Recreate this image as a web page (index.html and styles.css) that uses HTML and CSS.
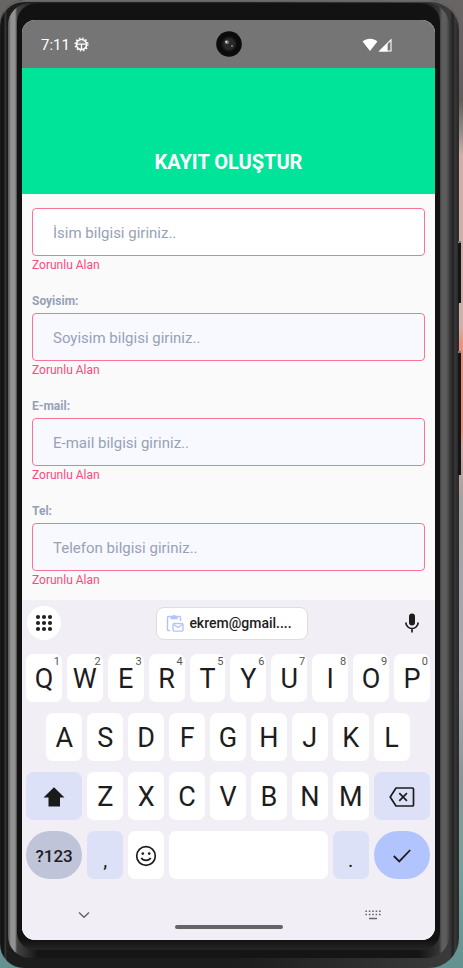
FILE: index.html
```html
<!DOCTYPE html>
<html lang="tr">
<head>
<meta charset="utf-8">
<meta name="viewport" content="width=device-width, initial-scale=1">
<title>Kayıt Oluştur</title>
<link rel="stylesheet" href="styles.css">
</head>
<body>
<div class="phone">
  <div class="rim">
  <div class="bezel">
    <main class="screen">
      <div class="status">
        <span class="clock">7:11</span>
        <svg class="gear" viewBox="0 0 16 16" width="15" height="15" fill="none" stroke="#fff">
          <circle cx="8" cy="8" r="5.4" stroke-width="1.7"/>
          <circle cx="8" cy="8" r="6.8" stroke-width="1.5" stroke-dasharray="1.6 1.96"/>
          <path d="M3 7.6h10M8 8v5" stroke-width="1.4"/>
          <path d="M6 5.4h.9M9.2 5.4h.9" stroke-width="1"/>
        </svg>
        <svg class="camera" viewBox="0 0 26 26" width="26" height="26">
          <circle cx="13" cy="13" r="12.8" fill="#0b0b0b"/>
          <circle cx="13" cy="13" r="7.6" fill="#191919"/>
          <circle cx="13" cy="13" r="6" fill="#292929"/>
          <circle cx="11" cy="11.3" r="2" fill="#777"/>
          <circle cx="10.2" cy="10.7" r="1" fill="#e4e4e4"/>
          <circle cx="16" cy="15" r="1" fill="#8c7c7c"/>
        </svg>
        <svg class="signals" viewBox="0 0 30 14" width="30" height="14">
          <path d="M.6 3.4C4.800 0 11.400 0 15.400 3.400L8 13Z" fill="#fff"/>
          <path d="M29 1.800V13H17.800Z" fill="none" stroke="#fff" stroke-width="1.100"/>
          <path d="M25.600 5V13.400H17Z" fill="#fff"/>
        </svg>
      </div>
      <header class="header"><h1>KAYIT OLUŞTUR</h1></header>
      <form class="form">
        <div class="field">
          <input class="box active" type="text" aria-label="İsim" placeholder="İsim bilgisi giriniz..">
          <p class="error">Zorunlu Alan</p>
        </div>
        <div class="field">
          <label for="surname">Soyisim:</label>
          <input class="box" id="surname" type="text" placeholder="Soyisim bilgisi giriniz..">
          <p class="error">Zorunlu Alan</p>
        </div>
        <div class="field">
          <label for="email">E-mail:</label>
          <input class="box" id="email" type="email" placeholder="E-mail bilgisi giriniz..">
          <p class="error">Zorunlu Alan</p>
        </div>
        <div class="field">
          <label for="tel">Tel:</label>
          <input class="box" id="tel" type="tel" placeholder="Telefon bilgisi giriniz..">
          <p class="error">Zorunlu Alan</p>
        </div>
      </form>
      <section class="keyboard">
        <div class="toolbar">
          <button class="apps" type="button" aria-label="Menü">
            <svg viewBox="0 0 18 18" width="18" height="18" fill="#222">
              <circle cx="3" cy="3" r="2.100"/><circle cx="9" cy="3" r="2.100"/><circle cx="15" cy="3" r="2.100"/>
              <circle cx="3" cy="9" r="2.100"/><circle cx="9" cy="9" r="2.100"/><circle cx="15" cy="9" r="2.100"/>
              <circle cx="3" cy="15" r="2.100"/><circle cx="9" cy="15" r="2.100"/><circle cx="15" cy="15" r="2.100"/>
            </svg>
          </button>
          <button class="chip" type="button">
            <svg viewBox="0 0 18 18" width="18" height="18" fill="none" stroke="#b3c4fd" stroke-width="1.400">
              <path d="M4 16.500H2.500a1 1 0 0 1-1-1V3.500a1 1 0 0 1 1-1h11a1 1 0 0 1 1 1V7"/>
              <path d="M4.500 2h2a1.800 1.800 0 0 1 3.200 0h2v3.200H4.500Z" fill="#b3c4fd" stroke="none"/>
              <rect x="7" y="9.500" width="10" height="7.600" rx="1"/>
              <path d="M7.500 10.500l4.500 3 4.500-3"/>
            </svg>
            <span>ekrem@gmail....</span>
          </button>
          <button class="mic" type="button" aria-label="Sesle yazma">
            <svg viewBox="0 0 14 20" width="14" height="20">
              <rect x="4" y="0.500" width="6" height="12" rx="3" fill="#1d1d1d"/>
              <path d="M.9 9.500a6.100 6 0 0 0 12.200 0M7 15.500V19.500" fill="none" stroke="#1d1d1d" stroke-width="1.700"/>
            </svg>
          </button>
        </div>
        <div class="keys">
          <button type="button" class="key">Q<sup>1</sup></button>
          <button type="button" class="key">W<sup>2</sup></button>
          <button type="button" class="key">E<sup>3</sup></button>
          <button type="button" class="key">R<sup>4</sup></button>
          <button type="button" class="key">T<sup>5</sup></button>
          <button type="button" class="key">Y<sup>6</sup></button>
          <button type="button" class="key">U<sup>7</sup></button>
          <button type="button" class="key">I<sup>8</sup></button>
          <button type="button" class="key">O<sup>9</sup></button>
          <button type="button" class="key">P<sup>0</sup></button>
          <button type="button" class="key indent">A</button>
          <button type="button" class="key">S</button>
          <button type="button" class="key">D</button>
          <button type="button" class="key">F</button>
          <button type="button" class="key">G</button>
          <button type="button" class="key">H</button>
          <button type="button" class="key">J</button>
          <button type="button" class="key">K</button>
          <button type="button" class="key">L</button>
          <button type="button" class="key wide tint first" aria-label="Shift">
            <svg viewBox="0 0 22 20" width="22" height="20"><path d="M11 .2L21.500 10.500H17V19.600H5.500V10.500H.5Z" fill="#1a1a1a"/></svg>
          </button>
          <button type="button" class="key">Z</button>
          <button type="button" class="key">X</button>
          <button type="button" class="key">C</button>
          <button type="button" class="key">V</button>
          <button type="button" class="key">B</button>
          <button type="button" class="key">N</button>
          <button type="button" class="key">M</button>
          <button type="button" class="key wide tint" aria-label="Sil">
            <svg viewBox="0 0 26 20" width="26" height="20" fill="none" stroke="#1d1d1d" stroke-width="1.700" stroke-linejoin="round">
              <path d="M7 1H23.500a1 1 0 0 1 1 1V18a1 1 0 0 1-1 1H7L1.200 10Z"/>
              <path d="M10.300 6.200l7.600 7.600M17.900 6.200l-7.600 7.600"/>
            </svg>
          </button>
          <button type="button" class="key wide round symbols first">?123</button>
          <button type="button" class="key tint mark">,</button>
          <button type="button" class="key" aria-label="Emoji">
            <svg viewBox="0 0 22 22" width="22" height="22" fill="none" stroke="#1d1d1d" stroke-width="1.700">
              <circle cx="11" cy="11" r="9.300"/>
              <path d="M6.300 12.800a5.200 4.500 0 0 0 9.400 0"/>
              <circle cx="7.800" cy="8.600" r="1.300" fill="#1d1d1d" stroke="none"/>
              <circle cx="14.200" cy="8.600" r="1.300" fill="#1d1d1d" stroke="none"/>
            </svg>
          </button>
          <button type="button" class="key space" aria-label="Boşluk"></button>
          <button type="button" class="key tint mark">.</button>
          <button type="button" class="key wide round enter" aria-label="Tamam">
            <svg viewBox="0 0 18 14" width="18" height="14" fill="none" stroke="#1d1d1d" stroke-width="1.800"><path d="M.8 7L6.300 12.400 17.200 1"/></svg>
          </button>
        </div>
        <nav class="navbar">
          <button type="button" aria-label="Klavyeyi gizle">
            <svg viewBox="0 0 12 8" width="12" height="8" fill="none" stroke="#666" stroke-width="1.500"><path d="M1 1.500l5 4.700 5-4.700"/></svg>
          </button>
          <span class="pill"></span>
          <button type="button" aria-label="Klavye seç">
            <svg viewBox="0 0 16 10" width="16" height="10" fill="none" stroke="#666" stroke-width="1.600">
              <path d="M.4 1.300H16M.4 4.500H16" stroke-dasharray="1.600 1.800"/><path d="M4 8.500h8"/>
            </svg>
          </button>
        </nav>
      </section>
    </main>
  </div>
  </div>
</div>
</body>
</html>
```
FILE: styles.css
```css
* { box-sizing: border-box; }

body {
  margin: 0;
  min-height: 100vh;
  display: flex;
  font-family: Roboto, "Liberation Sans", sans-serif;
  background: linear-gradient(to bottom, #686564 0, #625d5c 100px, #8f8886 130px, #cfaea5 155px, #cdb2a9 325px, #e8917f 345px, #e8917f 430px, #cfaea5 445px, #a3a0a1 500px, #a9a8b0 680px, #8a9594 780px, #77a09b 870px, #62918f 968px);
}

button {
  margin: 0;
  padding: 0;
  border: 0;
  background: none;
  font-family: inherit;
  color: #1d1d1d;
}

svg { display: block; }

.phone {
  flex: 1;
  display: flex;
  position: relative;
  margin: 0 4px 0 0;
  padding: 3px 10px 10px 8px;
  border-radius: 24px 28px 30px 24px;
  background: linear-gradient(to right, #141414 0, #141414 4px, #3c3c3c 5px, #1c1c1c 7px, #1c1c1c 50%, #3a3a3a calc(100% - 9px), #202020 calc(100% - 6px), #393939 calc(100% - 4px), #242424 100%);
  box-shadow: inset 0 2px 1px #6b6b6b;
}

/* power and volume buttons on the right edge */
.phone::before,
.phone::after {
  content: "";
  position: absolute;
  right: -2px;
  width: 3px;
  background: #151515;
  border-top: 2px solid #777;
}

.phone::before { top: 241px; height: 60px; }
.phone::after { top: 351px; height: 122px; }

.rim {
  flex: 1;
  display: flex;
  padding: 1px 9px 8px;
  border-radius: 22px;
  background: linear-gradient(to right, #555 0, #929292 3px, #929292 7px, #444 9px, #151515 30px, #151515 calc(100% - 30px), #333 calc(100% - 10px), #5d5d5d calc(100% - 7px), #5d5d5d calc(100% - 3px), #444 100%);
}

.bezel {
  flex: 1;
  display: flex;
  padding: 16px 5px 10px;
  border-radius: 18px;
  background: linear-gradient(to bottom, #121212 0, #121212 calc(100% - 10px), #262626 100%);
}

.screen {
  flex: 1;
  min-width: 0;
  display: flex;
  flex-direction: column;
  overflow: hidden;
  border-radius: 13px;
  background: #fafafa;
}

.status {
  display: grid;
  grid-template-columns: auto 1fr auto 1fr;
  align-items: center;
  column-gap: 4px;
  height: 48px;
  padding: 1px 19px 0;
  background: #757575;
  position: relative;
}

.clock { color: #fff; font-size: 15px; line-height: 20px; }

.camera {
  position: absolute;
  left: 50%;
  top: 50%;
  transform: translate(-50%, -50%);
}

.signals { grid-column: 4; justify-self: end; margin-right: 24px; }

.header {
  height: 126px;
  display: flex;
  align-items: flex-end;
  justify-content: center;
  padding-bottom: 19px;
  background: #00e499;
}

h1 { margin: 0; font-size: 20px; line-height: 26px; font-weight: 700; color: #fff; }

.form {
  flex: 1;
  display: flex;
  flex-direction: column;
  gap: 19px;
  padding: 14px 10px 0;
}

.field { display: flex; flex-direction: column; }

.field label {
  margin-bottom: 4px;
  font-size: 12px;
  line-height: 16px;
  font-weight: 700;
  color: #95a1b6;
}

.box {
  width: 100%;
  height: 48px;
  padding: 1px 20px 0;
  border: 1px solid #fa7395;
  border-radius: 4px;
  background: #f7f9fe;
  font-family: inherit;
  font-size: 15px;
  color: #222b45;
}

.box.active { background: #fff; }
.box::placeholder { color: #97a2b7; opacity: 1; }

.error { margin: 0; font-size: 12px; line-height: 18px; color: #fb4a80; }

.keyboard { padding: 6px 4px 0; background: #f1eff5; }

.toolbar {
  display: grid;
  grid-template-columns: 1fr auto 1fr;
  align-items: center;
  padding: 0 12px 0 1px;
}

.apps {
  display: grid;
  place-items: center;
  width: 34px;
  height: 34px;
  border-radius: 50%;
  background: #fff;
}

.chip {
  display: flex;
  align-items: center;
  gap: 5px;
  height: 33px;
  padding: 0 15px 0 9px;
  margin-left: 18px;
  border: 1px solid #dbdee5;
  border-radius: 8px;
  background: #fff;
  font-size: 14px;
  font-weight: 500;
}

.mic { justify-self: end; }

.keys {
  display: grid;
  grid-template-columns: repeat(20, 1fr);
  grid-auto-rows: 48px;
  gap: 11px 5px;
  margin: 14px 1px 0 0;
}

.key {
  grid-column-end: span 2;
  display: flex;
  align-items: center;
  justify-content: center;
  min-width: 0;
  padding-top: 2px;
  position: relative;
  border-radius: 7px;
  background: #fff;
  font-size: 27px;
  line-height: 32px;
}

.key sup {
  position: absolute;
  top: 1px;
  right: 2px;
  font-size: 11px;
  line-height: 14px;
  color: #555;
}

.key.indent { grid-column: 2 / span 2; }
.key.wide { grid-column-end: span 3; }
.key.first { grid-column-start: 1; }
.key.space { grid-column-end: span 8; }
.key.tint { background: #dce1f8; }
.key.round { border-radius: 24px; }
.key.enter { background: #b2c4fe; }

.key.symbols {
  background: #bfc4d9;
  font-size: 17px;
  font-weight: 500;
}

.key.mark { font-size: 20px; padding-top: 10px; }

.navbar {
  display: grid;
  grid-template-columns: 1fr 108px 1fr;
  align-items: center;
  justify-items: center;
  column-gap: 32px;
  height: 61px;
  padding-top: 11px;
}

.pill {
  align-self: end;
  width: 100%;
  height: 4px;
  margin-bottom: 11px;
  border-radius: 2px;
  background: #666467;
}
```
